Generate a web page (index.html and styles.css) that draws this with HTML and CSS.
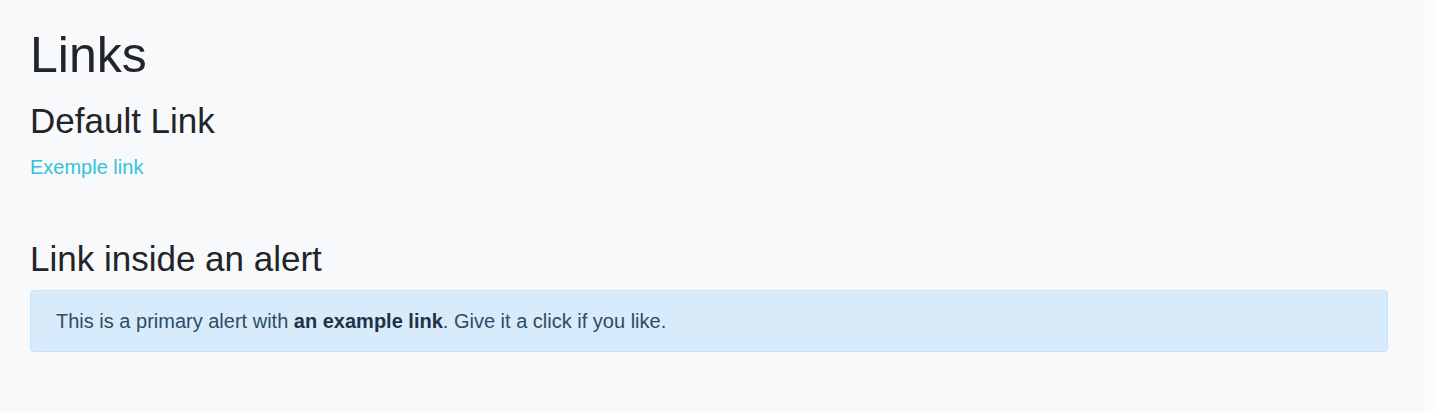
FILE: index.html
```html
<!DOCTYPE html>
<html lang="en">
<head>
<meta charset="utf-8">
<title>Links</title>
<link rel="stylesheet" href="styles.css">
</head>
<body>
<main class="page">
  <h1 class="title">Links</h1>
  <section class="section">
    <h3 class="subtitle">Default Link</h3>
    <p class="text"><a class="link" href="#">Exemple link</a></p>
  </section>
  <section class="section">
    <h3 class="subtitle">Link inside an alert</h3>
    <div class="alert">This is a primary alert with <a class="alert-link" href="#">an example link</a>. Give it a click if you like.</div>
  </section>
</main>
</body>
</html>
```

FILE: styles.css
```css
html, body {
  margin: 0;
  padding: 0;
  background: #fcfcfc;
}

.page {
  box-sizing: border-box;
  width: 1424px;
  min-height: 412px;
  padding: 25px 36px 0 30px;
  background: #f8f9fa;
  font-family: "Liberation Sans", Arial, sans-serif;
  font-size: 20px;
  line-height: 1.5;
  color: #212529;
}

.title {
  margin: 0 0 15px;
  font-size: 50px;
  font-weight: 400;
  line-height: 1.2;
}

.subtitle {
  margin: 0 0 10px;
  font-size: 35px;
  font-weight: 400;
  line-height: 1.2;
}

.section + .section {
  margin-top: 56px;
}

.text {
  margin: 0;
}

.link {
  color: #33c2da;
  text-decoration: none;
}

.alert {
  padding: 15px 25px;
  border: 1px solid #c6e1f8;
  border-radius: 4px;
  background: #d8ebfb;
  color: #2e4b64;
}

.alert-link {
  font-weight: 700;
  color: #1c3347;
  text-decoration: none;
}
```
